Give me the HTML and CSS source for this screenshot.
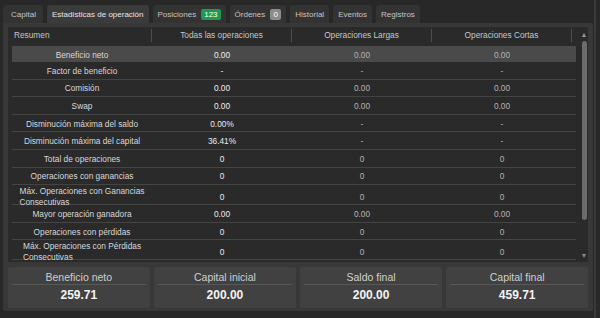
FILE: index.html
```html
<!DOCTYPE html>
<html lang="es">
<head>
<meta charset="utf-8">
<title>Estadísticas de operación</title>
<link rel="stylesheet" href="styles.css">
</head>
<body>
<div class="app">
  <div class="main">
    <nav class="tabs">
      <div class="tab">Capital</div>
      <div class="tab active">Estadísticas de operación</div>
      <div class="tab">Posiciones <span class="badge green">123</span></div>
      <div class="tab">Órdenes <span class="badge gray">0</span></div>
      <div class="tab">Historial</div>
      <div class="tab">Eventos</div>
      <div class="tab">Registros</div>
    </nav>
    <section class="panel">
      <div class="table-box">
        <div class="table">
          <div class="thead">
            <div class="th first">Resumen</div>
            <div class="th">Todas las operaciones</div>
            <div class="th">Operaciones Largas</div>
            <div class="th">Operaciones Cortas</div>
          </div>
          <div class="rows">
            <div class="row selected"><div class="lbl">Beneficio neto</div><div class="v1">0.00</div><div class="v">0.00</div><div class="v">0.00</div></div>
            <div class="row"><div class="lbl">Factor de beneficio</div><div class="v1">-</div><div class="v">-</div><div class="v">-</div></div>
            <div class="row"><div class="lbl">Comisión</div><div class="v1">0.00</div><div class="v">0.00</div><div class="v">0.00</div></div>
            <div class="row"><div class="lbl">Swap</div><div class="v1">0.00</div><div class="v">0.00</div><div class="v">0.00</div></div>
            <div class="row"><div class="lbl">Disminución máxima del saldo</div><div class="v1">0.00%</div><div class="v">-</div><div class="v">-</div></div>
            <div class="row"><div class="lbl">Disminución máxima del capital</div><div class="v1">36.41%</div><div class="v">-</div><div class="v">-</div></div>
            <div class="row"><div class="lbl">Total de operaciones</div><div class="v1">0</div><div class="v">0</div><div class="v">0</div></div>
            <div class="row"><div class="lbl">Operaciones con ganancias</div><div class="v1">0</div><div class="v">0</div><div class="v">0</div></div>
            <div class="row tall"><div class="lbl"><span class="wrap">Máx. Operaciones con Ganancias<br>Consecutivas</span></div><div class="v1">0</div><div class="v">0</div><div class="v">0</div></div>
            <div class="row"><div class="lbl">Mayor operación ganadora</div><div class="v1">0.00</div><div class="v">0.00</div><div class="v">0.00</div></div>
            <div class="row"><div class="lbl">Operaciones con pérdidas</div><div class="v1">0</div><div class="v">0</div><div class="v">0</div></div>
            <div class="row tall"><div class="lbl"><span class="wrap">Máx. Operaciones con Pérdidas<br>Consecutivas</span></div><div class="v1">0</div><div class="v">0</div><div class="v">0</div></div>
          </div>
        </div>
        <div class="scrollbar">
          <div class="arrow up"></div>
          <div class="thumb"></div>
          <div class="spacer"></div>
          <div class="arrow down"></div>
        </div>
      </div>
      <div class="cards">
        <div class="card"><div class="card-label">Beneficio neto</div><div class="card-value">259.71</div></div>
        <div class="card"><div class="card-label">Capital inicial</div><div class="card-value">200.00</div></div>
        <div class="card"><div class="card-label">Saldo final</div><div class="card-value">200.00</div></div>
        <div class="card"><div class="card-label">Capital final</div><div class="card-value">459.71</div></div>
      </div>
    </section>
  </div>
  <div class="frame-edge"></div>
</div>
</body>
</html>
```
FILE: styles.css
```css
* { box-sizing: border-box; }
html, body {
  margin: 0;
  padding: 0;
  background: #282828;
  width: 600px;
  height: 318px;
  overflow: hidden;
  font-family: "Liberation Sans", Arial, sans-serif;
}
.app {
  display: flex;
  height: 318px;
}
.main {
  width: 593px;
  padding: 5px 0 0 3px;
  display: flex;
  flex-direction: column;
}
.tabs {
  display: flex;
  gap: 4px;
  height: 18px;
}
.tab {
  display: flex;
  align-items: center;
  gap: 5px;
  padding: 0 5px;
  height: 18px;
  background: #333333;
  color: #c4c4c4;
  font-size: 8px;
  border-radius: 3px 3px 0 0;
  white-space: nowrap;
}
.tab:first-child {
  padding: 0 7px 0 8px;
}
.tab.active {
  background: #3b3b3b;
  color: #e6e6e6;
  padding: 0 5px;
}
.badge {
  display: inline-flex;
  align-items: center;
  justify-content: center;
  height: 11px;
  padding: 0 2px;
  min-width: 11px;
  border-radius: 2px;
  color: #ffffff;
  font-size: 8px;
}
.badge.green { background: #1d9a50; padding: 0 3px; }
.badge.gray { background: #8c8c8c; }
.panel {
  width: 590px;
  height: 288px;
  background: #383838;
  border-radius: 0 2px 2px 2px;
  padding: 4px 5px 3px 5px;
  display: flex;
  flex-direction: column;
}
.table-box {
  height: 235px;
  background: #2a2a2a;
  display: flex;
  overflow: hidden;
  border-radius: 1px;
}
.table {
  width: 571px;
  padding-left: 4px;
  font-size: 8.3px;
}
.thead {
  display: grid;
  grid-template-columns: 140px 140px 140px 140px;
  align-items: center;
  height: 17px;
}
.th {
  height: 13px;
  line-height: 13px;
  text-align: center;
  color: #c6c6c6;
  border-right: 1px solid #4e4e4e;
}
.th.first {
  text-align: left;
  padding-left: 2px;
}
.rows {
  width: 564px;
}
.row {
  display: grid;
  grid-template-columns: 140px 140px 140px 140px;
  align-items: center;
  height: 17.6px;
  padding-top: 1px;
  border-bottom: 1px solid #444444;
  text-align: center;
}
.row.selected {
  margin-top: 2px;
  height: 16px;
  background: #4a4a4a;
  border-bottom: none;
  border-radius: 1px;
}
.row.tall {
  height: 20px;
}
.lbl { color: #d8d8d8; }
.v1 { color: #ededed; }
.v { color: #b4b4b4; }
.wrap {
  display: inline-block;
  text-align: left;
  line-height: 10.5px;
}
.scrollbar {
  width: 9px;
  margin-left: 4px;
  display: flex;
  flex-direction: column;
  align-items: center;
  padding: 6px 0 4px 0;
}
.arrow {
  width: 0;
  height: 0;
  border-left: 2.5px solid transparent;
  border-right: 2.5px solid transparent;
}
.arrow.up { border-bottom: 4px solid #9a9a9a; }
.arrow.down { border-top: 4px solid #8a8a8a; }
.thumb {
  margin-top: 4px;
  width: 5px;
  height: 179px;
  background: #6c6c6c;
  border-radius: 3px;
}
.spacer { flex: 1; }
.cards {
  margin-top: 5px;
  height: 41px;
  display: grid;
  grid-template-columns: repeat(4, 1fr);
  gap: 4.5px;
}
.card {
  background: #414141;
  border-radius: 2px;
  padding: 4px 4px 0 4px;
  display: flex;
  flex-direction: column;
  align-items: stretch;
  text-align: center;
}
.card-label {
  font-size: 10.5px;
  color: #cfcfcf;
  height: 14px;
  line-height: 13px;
  border-bottom: 1px solid #585858;
}
.card-value {
  font-size: 12px;
  font-weight: bold;
  color: #f4f4f4;
  line-height: 20px;
}
.frame-edge {
  width: 2px;
  margin-left: 1px;
  background: #3a3a3a;
}
```
